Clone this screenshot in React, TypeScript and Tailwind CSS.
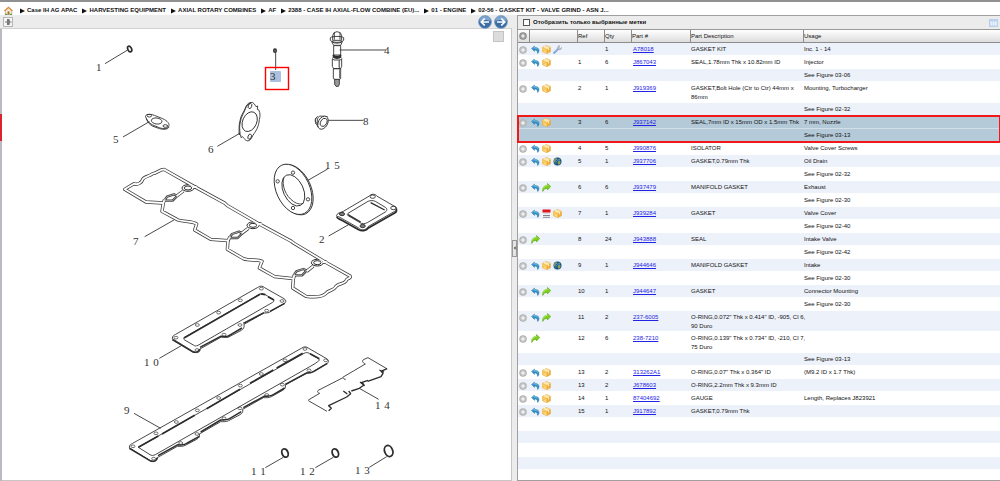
import { ChevronLeft } from "lucide-react";

type Icon = "back" | "box" | "wrench" | "globe" | "next" | "list";

interface Part {
  icons?: Icon[];
  refNo?: string;
  qty?: string;
  part?: string;
  desc?: string[];
  usage?: string;
  selected?: boolean;
}

const crumbs = [
  "Case IH AG APAC",
  "HARVESTING EQUIPMENT",
  "AXIAL ROTARY COMBINES",
  "AF",
  "2388 - CASE IH AXIAL-FLOW COMBINE (EU)...",
  "01 - ENGINE",
  "02-56 - GASKET KIT - VALVE GRIND - ASN J...",
];

const parts: Part[] = [
  { icons: ["back", "box", "wrench"], qty: "1", part: "A78018", desc: ["GASKET KIT"], usage: "Inc. 1 - 14" },
  { icons: ["back", "box"], refNo: "1", qty: "6", part: "J867043", desc: ["SEAL,1.78mm Thk x 10.82mm ID"], usage: "Injector" },
  { usage: "See Figure 03-06" },
  { icons: ["back", "box"], refNo: "2", qty: "1", part: "J919369", desc: ["GASKET,Bolt Hole (Ctr to Ctr) 44mm x", "86mm"], usage: "Mounting, Turbocharger" },
  { usage: "See Figure 02-32" },
  { icons: ["back", "box"], refNo: "3", qty: "6", part: "J937142", desc: ["SEAL,7mm ID x 15mm OD x 1.5mm Thk"], usage: "7 mm, Nozzle", selected: true },
  { usage: "See Figure 03-13", selected: true },
  { icons: ["back", "box"], refNo: "4", qty: "5", part: "J990876", desc: ["ISOLATOR"], usage: "Valve Cover Screws" },
  { icons: ["back", "box", "globe"], refNo: "5", qty: "1", part: "J937706", desc: ["GASKET,0.79mm Thk"], usage: "Oil Drain" },
  { usage: "See Figure 02-32" },
  { icons: ["back", "next"], refNo: "6", qty: "6", part: "J937479", desc: ["MANIFOLD GASKET"], usage: "Exhaust" },
  { usage: "See Figure 02-30" },
  { icons: ["back", "list", "box"], refNo: "7", qty: "1", part: "J939284", desc: ["GASKET"], usage: "Valve Cover" },
  { usage: "See Figure 02-40" },
  { icons: ["next"], refNo: "8", qty: "24", part: "J943888", desc: ["SEAL"], usage: "Intake Valve" },
  { usage: "See Figure 02-42" },
  { icons: ["back", "box", "globe"], refNo: "9", qty: "1", part: "J944646", desc: ["MANIFOLD GASKET"], usage: "Intake" },
  { usage: "See Figure 02-30" },
  { icons: ["back", "next"], refNo: "10", qty: "1", part: "J944647", desc: ["GASKET"], usage: "Connector Mounting" },
  { usage: "See Figure 02-30" },
  { icons: ["back", "next"], refNo: "11", qty: "2", part: "237-6005", desc: ['O-RING,0.072" Thk x 0.414" ID, -905, Cl 6,', "90 Duro"] },
  { icons: ["next"], refNo: "12", qty: "6", part: "238-7210", desc: ['O-RING,0.139" Thk x 0.734" ID, -210, Cl 7,', "75 Duro"] },
  { usage: "See Figure 03-13" },
  { icons: ["back", "box"], refNo: "13", qty: "2", part: "313262A1", desc: ['O-RING,0.07" Thk x 0.364" ID'], usage: "(M9.2 ID x 1.7 Thk)" },
  { icons: ["back", "box"], refNo: "13", qty: "2", part: "J678603", desc: ["O-RING,2.2mm Thk x 9.3mm ID"] },
  { icons: ["back", "box"], refNo: "14", qty: "1", part: "87404692", desc: ["GAUGE"], usage: "Length, Replaces J823921" },
  { icons: ["back", "box"], refNo: "15", qty: "1", part: "J917892", desc: ["GASKET,0.79mm Thk"] },
  {},
  {},
  {},
  {},
];

function PlusIcon({ dark = false }: { dark?: boolean }) {
  return (
    <svg viewBox="0 0 16 16" className="size-2 shrink-0">
      <circle cx="8" cy="8" r="7.5" fill={dark ? "#858585" : "#b0b0b0"} />
      <circle cx="8" cy="8" r="5.8" fill={dark ? "#a0a0a0" : "#c2c2c2"} />
      <path d="M8 4.500v7M4.500 8h7" stroke="#fff" strokeWidth="2" />
    </svg>
  );
}

function RowIcon({ name }: { name: Icon }) {
  const cls = "size-[9px] shrink-0";
  switch (name) {
    case "back":
      return (
        <svg viewBox="0 0 18 18" className={cls}>
          <path d="M1 7 7 2v3c6-.5 9 2 9 6 0 2-.8 4-2 5.500-.5.5-1 .2-1-.5C13 12 11.500 10 7 10v3Z" fill="#2f8fc4" stroke="#1c6d9f" strokeWidth=".8" />
          <path d="m3 7 4-3v2.500c4 0 6.500 1 7.500 3" fill="none" stroke="#8ccbea" strokeWidth="1.200" />
        </svg>
      );
    case "next":
      return (
        <svg viewBox="0 0 18 18" className={cls}>
          <path d="M17.500 7 11 1v3.500C4 4.500.8 9 1.500 17 3.500 12.500 6 10.800 11 10.800V14Z" fill="#7fd01c" stroke="#4f9c12" strokeWidth="1" />
          <path d="M11.500 4.500C7 5 4 7 3 11" fill="none" stroke="#c3f27c" strokeWidth="1.500" />
        </svg>
      );
    case "box":
      return (
        <svg viewBox="0 0 18 18" className={cls}>
          <path d="M9 1 17 4.500v9L9.500 17.500 1 13.500v-9Z" fill="#f0b13c" stroke="#d99522" strokeWidth=".8" />
          <path d="M9 1 17 4.500 9.500 8.500 1 4.500Z" fill="#fbdc93" />
          <path d="M1 4.500 9.500 8.500v9L1 13.500Z" fill="#f8c962" />
          <path d="M4.500 3 13 7v3.500M5 13l2.500 1.200" fill="none" stroke="#fff4d8" strokeWidth="1.800" />
        </svg>
      );
    case "wrench":
      return (
        <svg viewBox="0 0 18 18" className={cls}>
          <path d="m2.500 15.500 8-8" stroke="#7e9fd6" strokeWidth="4.200" strokeLinecap="round" />
          <path d="M13.500 1a4.500 4.500 0 0 0-4.500 6l2.500 2.500a4.500 4.500 0 0 0 6-5l-2.700 2.300-2.500-2.300Z" fill="#b9bfca" stroke="#8a93a3" strokeWidth=".7" />
          <path d="m3 14 6-6" stroke="#c4d6f4" strokeWidth="1.200" />
        </svg>
      );
    case "globe":
      return (
        <svg viewBox="0 0 18 18" className={cls}>
          <circle cx="9" cy="9" r="8" fill="#1d4f7d" />
          <path d="M3 4c3-3 6-1 5 1s-3 1-3 4-2 2-3 1ZM10 9c2-2 5 0 5 2s-2 5-4 4-2-4-1-6ZM12 3l3 2-2 2Z" fill="#8aa653" />
          <path d="M2 8c4-4 9-3 13 1M5 14c1-5 4-8 8-10" fill="none" stroke="#4c9bd0" strokeWidth="1.400" />
        </svg>
      );
    case "list":
      return (
        <svg viewBox="0 0 18 18" className={cls}>
          <path d="M1 1h16v6H1z" fill="#e0141e" />
          <path d="M1 8h16v9H1z" fill="#fff" />
          <path d="M2 9.500h14" stroke="#b9bac8" strokeWidth="1.500" />
          <path d="M2 13h14M2 16.500h14" stroke="#55566a" strokeWidth="1.500" />
        </svg>
      );
  }
}

function NavIcon({ flip = false }: { flip?: boolean }) {
  return (
    <svg viewBox="0 0 28 28" className="size-3.5">
      <circle cx="14" cy="14" r="13" fill="#3c6ea6" stroke="#8aa6c6" strokeWidth="1.500" />
      <path d="M2.500 12a11.600 11.600 0 0 1 23 0c-6-3-17-3-23 0Z" fill="#7fa5cf" />
      <path
        d={flip ? "M6 14h15M14.500 7l7 7-7 7" : "M22 14H7M13.500 7l-7 7 7 7"}
        fill="none"
        stroke="#fff"
        strokeWidth="3.400"
      />
    </svg>
  );
}

const THIRD = "scale(.33333)";
const gasketEdges = [
  "M74 328 102 311C112 316 126 308 128 298 134 288 150 289 158 281 170 280 180 268 192 268L280 318 375 370 382 377 474 430 574 484 582 490 672 544 750 588C756 596 738 594 738 603 730 614 712 610 706 622 700 632 686 630 678 640 664 654 640 652 618 649L578 624 580 596 524 590 478 564 486 544C470 536 450 544 430 536L382 508 384 482 332 478 284 450 290 432C278 422 252 426 234 420L186 394 190 369 138 366Z",
  "M190 369 194 358M230 348 250 333M278 322 290 320",
  "M384 482 390 470M425 460 445 445M473 434 485 431",
  "M580 596 584 584M620 574 640 558M668 547 680 545",
];
const shortHoles = [[228, 203], [292, 165], [356, 128], [421, 91], [484, 56], [546, 93], [500, 122], [420, 165], [372, 194], [291, 240]];
const longHoles = [[99, 529], [168, 490], [229, 456], [292, 421], [356, 384], [421, 347], [484, 312], [555, 271], [615, 237], [677, 271], [627, 301], [547, 344], [500, 375], [420, 415], [372, 445], [291, 492], [242, 519], [161, 566]];
const labels: [string, number, number][] = [
  ["1", 96, 71], ["3", 270, 80], ["4", 384, 54], ["5", 113, 143], ["6", 208, 153], ["8", 363, 125],
  ["7", 133, 245], ["2", 319, 243], ["9", 124, 414],
];
const wideLabels: [string, number, number][] = [
  ["1 5", 325, 169], ["1 0", 144, 366], ["1 4", 375, 409], ["1 1", 251, 475], ["1 2", 300, 475], ["1 3", 355, 474],
];

function PartsDiagram() {
  return (
    <svg viewBox="2 29 509 451" preserveAspectRatio="xMinYMin meet" className="block h-full w-full">
      <rect x="270" y="71" width="11" height="11" rx="1" fill="#abbfde" />
      <g fill="none" stroke="#2c2c2c" strokeWidth="2.600" strokeLinejoin="round">
        {/* seals and nozzle washer */}
        <g transform={THIRD}>
          <ellipse cx="389" cy="147" rx="5.500" ry="9" strokeWidth="5" transform="rotate(-25 389 147)" />
          <path d="m315 191 68-41M827 158v52" />
          <ellipse cx="825" cy="152" rx="4" ry="5" strokeWidth="4" fill="#888" />
        </g>
        {/* injector */}
        <g transform="translate(300 0) scale(.33333)">
          <path d="M98 107 102 98 111 95 121 98 125 107V121H98ZM103 99v20M120 99v20M91 113c6-5 34-5 40 0v8c-8 8-32 8-40 0ZM95 125c8 6 24 6 32 0l-5 11H101Z" fill="#fff" />
          <path d="M101 137h21v28h-21Z" fill="#fff" />
          <path d="M98 165c8 6 18 6 26 0M98 170c8 6 18 6 26 0" strokeWidth="4.500" />
          <path d="M97 176 102 180h20l3-4v23l-3 7H101l-4-7Z" fill="#fff" />
          <path d="M118 180v24M100 206h22v30c-6 4-16 4-22 0Z" />
          <path d="M104 238v15l4 6h7l3-6v-15Z" fill="#999" />
          <path d="M118 182v20M119 208v26" strokeWidth="4" stroke="#777" />
          <path d="M119 150h139" />
        </g>
        <g transform="translate(100 80) scale(.33333)">
          {/* oil drain gasket */}
          <path d="M137 111c-4-9 14-10 26-5l20 8c16 6 25 14 24 23-2 11-18 10-29 6l-20-8c-12-6-18-16-21-24Z" />
          <path d="M139 116c4 12 9 17 20 23l20 7c12 3 24 3 28-5" />
          <ellipse cx="170" cy="123" rx="16" ry="9" transform="rotate(8 170 123)" />
          <ellipse cx="148" cy="107" rx="7" ry="4" />
          <ellipse cx="196" cy="138" rx="7" ry="4" />
          <path d="m69 171 79-46" />
          {/* manifold gasket */}
          <path d="M453 67c8-1 12 8 15 13l5-2-1 10 4 1c6 12 4 22 2 30-2 22-9 32-16 42-6 8-8 20-18 22-12-2-11-11-17-13l-4 3-1-8-5-2c1-14-1-27 3-41 3-17 9-22 15-35 3-9 7-18 18-20Z" />
          <path d="M450 70c-10 4-13 14-16 22-5 12-11 20-13 34-4 15-1 27-1 38" />
          <ellipse cx="449" cy="125" rx="21" ry="31" transform="rotate(24 449 125)" />
          <ellipse cx="450" cy="78" rx="5" ry="8" transform="rotate(20 450 78)" />
          <ellipse cx="449" cy="170" rx="5" ry="8" transform="rotate(20 449 170)" />
          <path d="m352 199 69-40" />
          {/* isolator */}
          <path d="M655 109c-9 2-10 15-7 23M650 112c-7 6-5 14 0 17M659 108l24 2M648 130l8 14M659 109c-8 4-9 16-5 26" />
          <ellipse cx="669" cy="128" rx="14" ry="21" fill="#fff" transform="rotate(28 669 128)" />
          <ellipse cx="671" cy="127" rx="9" ry="13" transform="rotate(28 671 127)" />
          <path d="M686 121h104" />
          {/* round gasket */}
          <ellipse cx="583" cy="329" rx="50" ry="80" transform="rotate(-25 583 329)" />
          <ellipse cx="579" cy="328" rx="50" ry="80" fill="#fff" transform="rotate(-25 579 328)" />
          <ellipse cx="580" cy="331" rx="30" ry="50" transform="rotate(-25 580 331)" />
          <path d="M552 292c-8 22 4 56 28 72 12 9 25 10 31 5" />
          <circle cx="579" cy="278" r="5" />
          <circle cx="533" cy="304" r="5" />
          <circle cx="624" cy="358" r="5" />
          <circle cx="579" cy="384" r="5" />
          <path d="m624 301 59-34" />
          {/* square flange gasket */}
          <path d="M710 406c2-8 12-8 20-12l78-46c5-7 18-7 22 0l52 30c10 2 10 14 2 16l-80 46c-6 12-22 12-28 4l-60-34c-6 0-7-2-6-4Z" fill="#fff" />
          <path d="M710 410c2 8 8 6 14 10l52 29c8 6 24 3 28-4l80-46c4-2 7-6 5-13" strokeWidth="5" />
          <path d="m744 400 60-36c8-3 16-3 22 0l30 18c6 4 6 10 0 14l-54 32c-8 4-16 4-22 0l-34-20c-5-3-5-5-2-8Z" />
          <path d="m744 404 38 22M812 368l42 22" strokeWidth="4" />
          <ellipse cx="818" cy="350" rx="8" ry="5" />
          <ellipse cx="880" cy="384" rx="8" ry="5" />
          <ellipse cx="726" cy="402" rx="8" ry="5" fill="#777" />
          <ellipse cx="788" cy="438" rx="8" ry="5" fill="#777" />
          <path d="m686 468 60-34" />
          {/* valve cover gasket */}
          <g>
            {gasketEdges.map((d) => (
              <path key={d} d={d} strokeWidth="10" stroke="#3a3a3a" />
            ))}
            {[[0, 0], [195, 112], [388, 224]].map(([x, y]) => (
              <g key={x} transform={`translate(${x} ${y})`}>
                <path d="M193 362 201 350 222 343 232 348 218 362Z" strokeWidth="7" stroke="#3a3a3a" />
                <ellipse cx="264" cy="324" rx="18" ry="10" strokeWidth="3" fill="#fff" />
                <ellipse cx="264" cy="324" rx="11" ry="6" strokeWidth="3" />
              </g>
            ))}
            {gasketEdges.map((d) => (
              <path key={d} d={d} strokeWidth="5.500" stroke="#fff" />
            ))}
            {[[0, 0], [195, 112], [388, 224]].map(([x, y]) => (
              <path key={x} transform={`translate(${x} ${y})`} d="M193 362 201 350 222 343 232 348 218 362Z" strokeWidth="2" stroke="#ddd" />
            ))}
          </g>
          <path d="m134 470 88-50" />
        </g>
        <g transform="translate(100 270) scale(.33333)">
          {/* short side cover */}
          <path d="M217 206c0-8 4-10 10-13L472 53c8-6 16-6 22 0l58 33c8 5 6 12 0 15l-38 22c-6 6-14 6-22 6l-60 34c2 10-2 14-8 18l-34 18c-6 6-18 2-26 2l-64 36c2 9-8 14-18 9Z" />
          <path d="m217 209 60 36c12 4 20 0 22-8M300 232l62-33c12 3 22 2 30-5l34-20M430 160l62-32M510 124l44-24" strokeWidth="4.500" />
          <path d="m252 203 226-130c6-3 10-3 16 0l24 14c6 4 4 8 0 10L294 226c-6 3-10 2-14-1l-26-15c-3-2-4-5-2-7Z" />
          <path d="m252 204 228-131M482 72l14 2M504 80l18 10" strokeWidth="5" />
          {shortHoles.map(([x, y]) => (
            <ellipse key={`${x}-${y}`} cx={x} cy={y} rx="6" ry="4" strokeWidth="2" />
          ))}
          <path d="m178 265 66-38" />
          {/* long side cover */}
          <path d="M88 533c0-8 4-10 10-13L604 235c8-6 16-6 22 0l54 31c8 5 6 12 0 15l-38 22c-6 6-14 6-22 6l-64 36c2 9-2 12-8 16l-34 19c-8 4-16 3-24 3l-62 35c2 9-2 12-8 16l-34 18c-8 4-16 3-24 3l-64 37c2 9-2 12-8 16l-34 18c-8 4-16 3-24 3l-62 35c2 9-8 14-18 9Z" />
          <path d="m88 535 62 37c12 4 20 0 22-8M174 557l60-33c14 2 20 2 28-5l36-20M302 486l60-36c14 0 20 0 28-5l34-20M430 413l62-34c14 0 20 0 28-5l34-20M556 343l64-34c10 0 16-1 22-5l40-24" strokeWidth="4.500" />
          <path d="M115 532 612 250c6-3 10-3 16 0l26 15c6 4 4 7-1 10l-8 6L166 554c-6 3-12 3-16 0Z" />
          <path d="m115 532 60-34M186 492l98-56M320 416l100-58M450 340l70-40M530 294l78-44M630 251l28 15" strokeWidth="5" />
          {longHoles.map(([x, y]) => (
            <ellipse key={`${x}-${y}`} cx={x} cy={y} rx="6" ry="4" strokeWidth="2" />
          ))}
          <path d="m102 430 80 45" />
          {/* shim */}
          <path d="m625 390 34-20c-8-2-8-8-2-10l70-36c10 0 2 6 10 4M728 322l68-40c-8-4-12-10-4-14l12-5 58 34M625 392l56 32" />
          <path d="M861 296l-18 8 6 6-6 10-40 14M852 306l-14-6M804 331l-18 6 6 8-14 10-24 8M794 347l-14-11M746 363l6 8-12 10-54 26 8 8-8 7M742 372l-12-9" strokeWidth="4" />
          <path d="m778 355 58 33" />
          {/* o-rings */}
          <ellipse cx="555" cy="549" rx="9" ry="13" strokeWidth="5.500" transform="rotate(-22 555 549)" />
          <ellipse cx="706" cy="549" rx="9" ry="13" strokeWidth="5.500" transform="rotate(-22 706 549)" />
          <ellipse cx="866" cy="543" rx="12" ry="17" strokeWidth="5.500" transform="rotate(-22 866 543)" />
          <path d="m496 593 54-31M646 593l54-31M808 592l52-32" />
        </g>
      </g>
      <rect x="265.500" y="67.500" width="23" height="22" fill="none" stroke="#f00" strokeWidth="1.400" />
      <g fill="#333" className="font-['Liberation_Serif',serif] text-[11px]">
        {[...labels, ...wideLabels].map(([t, x, y]) => (
          <text key={t} x={x} y={y}>
            {t.replace(" ", "\u2004")}
          </text>
        ))}
      </g>
    </svg>
  );
}

const th = "border-b border-[#8c8c8c] p-0 text-left align-middle font-normal";

export default function App() {
  return (
    <div className="flex h-screen flex-col overflow-hidden bg-white font-['Liberation_Sans',Arial,sans-serif] text-[6px] leading-[9px] text-[#111]">
      <nav className="flex h-[15px] shrink-0 items-center gap-[5px] border-t-2 border-[#909090] pt-1 pl-1 font-bold whitespace-nowrap">
        <a href="#home" aria-label="Home" className="mr-0.5">
          <svg viewBox="0 0 20 20" className="size-[9px]">
            <path d="M3 10v9h14v-9l-7-6Z" fill="#f5ead2" stroke="#8a8a70" />
            <path d="M8 12h4v7H8z" fill="#a8682c" />
            <path d="m1 11 9-8 9 8" fill="none" stroke="#d9853a" strokeWidth="2.600" />
            <path d="M2 18.500h5M13 18.500h5" stroke="#5f9a3c" strokeWidth="2.500" />
          </svg>
        </a>
        {crumbs.map((c) => (
          <span key={c} className="flex items-center gap-0.5">
            <svg viewBox="0 0 5 6" className="h-1.5 w-[5px]">
              <path d="M0 .5 5 3 0 5.500Z" fill="#111" />
            </svg>
            <a href="#crumb">{c}</a>
          </span>
        ))}
      </nav>

      <div className="flex min-h-0 flex-1 bg-[#ececec]">
        <section className="flex w-[51.2%] shrink-0 flex-col">
          <div className="flex h-3.5 shrink-0 items-center justify-between border-b border-[#d2d2d2] pr-1 pl-[3px]">
            <button aria-label="Pin" className="flex size-2.5 items-center justify-center border border-[#b5b5b5] bg-[#f6f6f6]">
              <svg viewBox="0 0 16 16" className="size-2">
                <path d="M2 8h5V3l3 0v10H7V8M10 8h5" fill="none" stroke="#777" strokeWidth="2.200" />
                <path d="M6 4h5v8H6z" fill="#777" />
              </svg>
            </button>
            <div className="flex gap-0.5">
              <button aria-label="Previous"><NavIcon /></button>
              <button aria-label="Next"><NavIcon flip /></button>
            </div>
          </div>
          <div className="flex min-h-0 flex-1">
            <div className="flex w-0.5 shrink-0 flex-col bg-[#b9b9c0]">
              <div className="mt-[85px] h-[27px] bg-[#d8242c]" />
            </div>
            <div className="relative min-w-0 flex-1 border-r border-b border-[#c6c6c6] bg-white">
              <PartsDiagram />
              <button aria-label="Overview" className="absolute top-0.5 right-[7px] size-[11px] border border-[#c4c4c4] bg-[#dcdcdc]" />
            </div>
          </div>
        </section>

        <div className="flex w-[5px] shrink-0 items-center">
          <button aria-label="Collapse" className="flex h-[17px] w-[5px] items-center justify-center border border-[#999] bg-[#e4e4e4]">
            <ChevronLeft className="size-1 shrink-0" strokeWidth={6} />
          </button>
        </div>

        <section className="flex min-w-0 flex-1 flex-col border-t border-b border-l border-[#a0a0a0] bg-white">
          <div className="flex h-3.5 shrink-0 items-center justify-between border-b border-[#999] bg-[#ececec] pr-0.5 pl-[5px]">
            <label className="flex items-center gap-[3px] font-bold">
              <input type="checkbox" className="size-[7px] appearance-none border border-[#555] bg-white" />
              Отобразить только выбранные метки
            </label>
            <button aria-label="Columns">
              <svg viewBox="0 0 18 16" className="h-2 w-[9px]">
                <rect x=".5" y=".5" width="17" height="15" rx="2" fill="#bcd4f0" stroke="#9bbce2" />
                <path d="M3 5h3.500v8H3zM7.500 5H11v8H7.500zM12 5h3.500v8H12z" fill="#e9f2fc" />
              </svg>
            </button>
          </div>
          <table className="w-full table-fixed border-separate border-spacing-0">
            <colgroup>
              <col className="w-[11px]" />
              <col className="w-12" />
              <col className="w-[27px]" />
              <col className="w-[27px]" />
              <col className="w-[59px]" />
              <col className="w-[113px]" />
              <col />
            </colgroup>
            <thead>
              <tr className="h-[13px] bg-linear-to-b from-white to-[#dadada]">
                <th className={`${th} pl-px`}><PlusIcon dark /></th>
                <th className={`${th} border-l`} />
                <th className={`${th} border-l`}>Ref</th>
                <th className={`${th} border-l`}>Qty</th>
                <th className={`${th} border-l`}>Part #</th>
                <th className={`${th} border-l`}>Part Description</th>
                <th className={`${th} border-l`}>Usage</th>
              </tr>
            </thead>
            {[parts.slice(0, 5), parts.slice(5, 7), parts.slice(7)].map((group, g) => (
              <tbody key={g} className={g === 1 ? "outline-2 -outline-offset-1 outline-[#f01818]" : ""}>
                {group.map((p, i) => {
                  const striped = g === 0 ? i % 2 === 0 : i % 2 === 1;
                  const bg = p.selected ? "bg-[#b4cad9]" : striped ? "bg-[#edf2fa]" : "bg-white";
                  const td = `p-0 pt-0.5 align-top border-b whitespace-nowrap ${p.selected ? "border-[#d3dfe8]" : "border-white"}`;
                  return (
                    <tr key={i} className={`h-[13px] ${bg}`}>
                      <td className={`${td} pl-px`}>
                        {p.icons && <button aria-label="Add" className="flex h-[9px] items-center"><PlusIcon /></button>}
                      </td>
                      <td className={`${td} pl-0.5`}>
                        <div className="flex gap-0.5">{p.icons?.map((n) => <RowIcon key={n} name={n} />)}</div>
                      </td>
                      <td className={`${td} pl-px`}>{p.refNo}</td>
                      <td className={`${td} pl-px`}>{p.qty}</td>
                      <td className={`${td} pl-0.5`}>
                        {p.part && <a href="#part" className="text-[#2323e6] underline">{p.part}</a>}
                      </td>
                      <td className={`${td} pl-px`}>
                        {p.desc?.map((line) => <div key={line}>{line}</div>)}
                      </td>
                      <td className={`${td} pl-px`}>{p.usage}</td>
                    </tr>
                  );
                })}
              </tbody>
            ))}
          </table>
        </section>
      </div>
    </div>
  );
}
